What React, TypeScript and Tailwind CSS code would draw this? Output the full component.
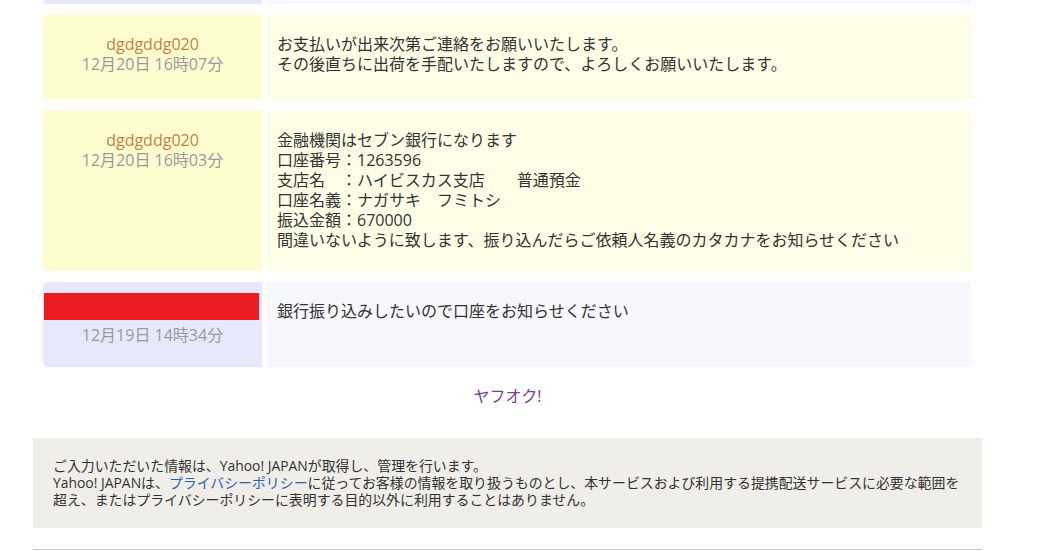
import React from 'react';

type Message = {
  user?: string;
  date: string;
  lines: string[];
  mine?: boolean;
};

const messages: Message[] = [
  {
    user: 'dgdgddg020',
    date: '12月20日 16時07分',
    lines: [
      'お支払いが出来次第ご連絡をお願いいたします。',
      'その後直ちに出荷を手配いたしますので、よろしくお願いいたします。',
    ],
  },
  {
    user: 'dgdgddg020',
    date: '12月20日 16時03分',
    lines: [
      '金融機関はセブン銀行になります',
      '口座番号：1263596',
      '支店名　：ハイビスカス支店　　普通預金',
      '口座名義：ナガサキ　フミトシ',
      '振込金額：670000',
      '間違いないように致します、振り込んだらご依頼人名義のカタカナをお知らせください',
    ],
  },
  {
    date: '12月19日 14時34分',
    lines: ['銀行振り込みしたいので口座をお知らせください'],
    mine: true,
  },
];

function MessageRow({ msg }: { msg: Message }) {
  const left = msg.mine ? 'bg-[#e8e8fc]' : 'bg-[#fffdd0]';
  const right = msg.mine ? 'bg-[#f7f7fe]' : 'bg-[#fffee6]';
  return (
    <div className="flex gap-[5px] min-h-[85px]">
      <div className={`w-[219px] shrink-0 rounded-l-[5px] text-center ${left} ${msg.mine ? 'pt-[11px]' : 'pt-[19px]'}`}>
        {msg.mine ? (
          <div className="ml-px w-[215px] h-[27px] bg-[#ed1c24] mb-[5px]" />
        ) : (
          <div className="text-[#c4813e]">{msg.user}</div>
        )}
        <div className="text-[#9a9a9a]">{msg.date}</div>
      </div>
      <div className={`flex-1 rounded-r-[5px] pl-[10px] pt-[19px] pb-[21px] text-[#333] ${right}`}>
        {msg.lines.map((l, i) => (
          <div key={i}>{l}</div>
        ))}
      </div>
    </div>
  );
}

export default function App() {
  return (
    <div
      className="bg-white w-[1051px] h-[551px] overflow-hidden text-[16px] leading-[20px]"
      style={{ fontFamily: '"Open Sans", "Noto Sans CJK JP", sans-serif' }}
    >
      <div className="ml-[33px] w-[949px]">
        <div className="flex flex-col gap-[11px] mx-[10px]">
          <div className="flex gap-[5px] h-[4px]">
            <div className="w-[219px] rounded-bl-[5px] bg-[#e8e8fc]" />
            <div className="flex-1 rounded-br-[5px] bg-[#f7f7fe]" />
          </div>
          {messages.map((m, i) => (
            <MessageRow key={i} msg={m} />
          ))}
        </div>

        <div className="mt-[19px] mb-[32px] text-center">
          <a href="#" className="text-[#7b3f8c]">ヤフオク!</a>
        </div>

        <div className="bg-[#efeee8] px-[20px] pt-[19px] pb-[20px] text-[13.9px] leading-[17px] text-[#333]">
          <p>ご入力いただいた情報は、Yahoo! JAPANが取得し、管理を行います。</p>
          <p>
            Yahoo! JAPANは、<a href="#" className="text-[#2f5fb8]">プライバシーポリシー</a>
            に従ってお客様の情報を取り扱うものとし、本サービスおよび利用する提携配送サービスに必要な範囲を
            <br />
            超え、またはプライバシーポリシーに表明する目的以外に利用することはありません。
          </p>
        </div>

        <div className="mt-[21px] border-t border-[#c8c8c8]" />
      </div>
    </div>
  );
}
